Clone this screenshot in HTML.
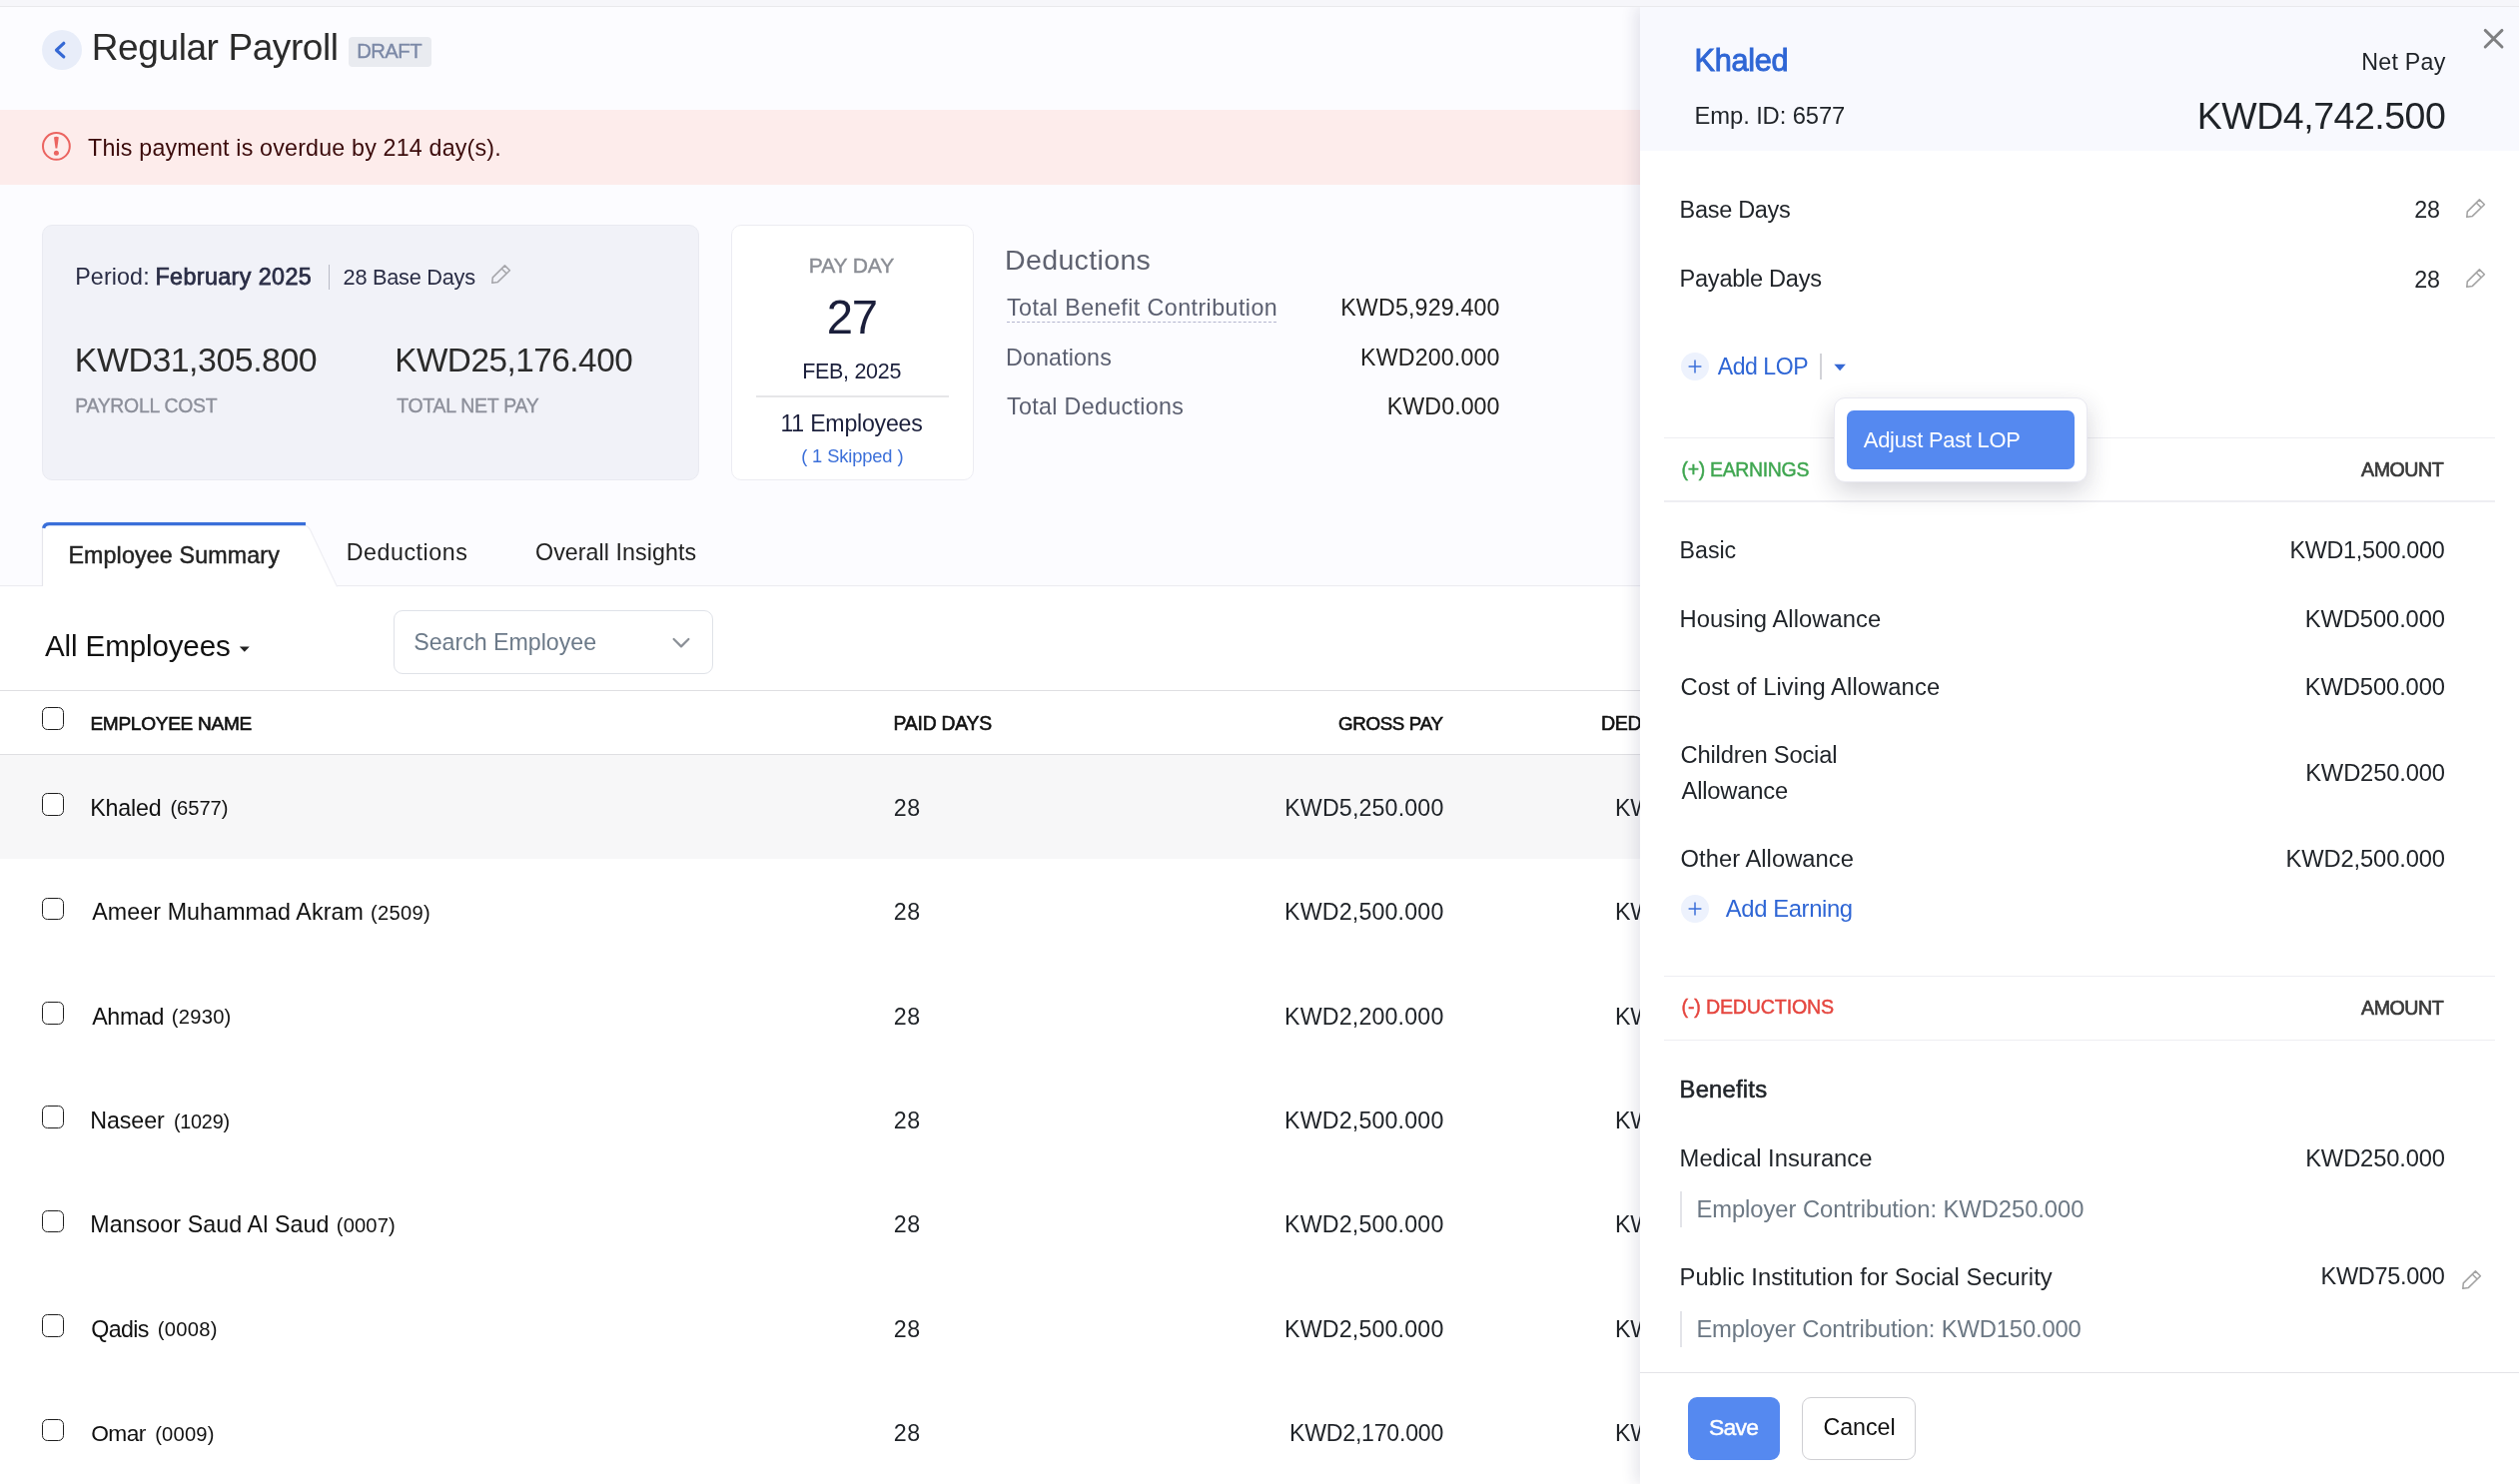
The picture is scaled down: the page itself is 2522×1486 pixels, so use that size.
<!DOCTYPE html>
<html lang="en">
<head>
<meta charset="utf-8">
<title>Regular Payroll</title>
<style>
*{box-sizing:border-box;margin:0;padding:0}
html,body{width:2522px;height:1486px;overflow:hidden}
body{position:relative;background:#fcfcff;font-family:"Liberation Sans",sans-serif;color:#1f2328}
.app{position:absolute;left:0;top:0;width:2522px;height:1486px;overflow:hidden;will-change:transform}
.t{position:absolute;white-space:nowrap;font-weight:400;font-style:normal;display:block}
.abs,.ic,.chk,.plus,.row,.line{position:absolute;display:block}
.topbar{left:0;top:0;width:2522px;height:7px;background:#f6f6fa;border-bottom:1px solid #e9e9ec}
.back{left:42px;top:30px;width:40px;height:40px;border-radius:50%;background:#e8edf9}
.badge{left:349px;top:37px;width:83px;height:30px;border-radius:4px;background:#e9ebf0}
.alert{left:0;top:110px;width:2522px;height:75px;background:#fdeceb}
.card{left:42px;top:224.5px;width:658px;height:256.5px;border-radius:10px;background:#f1f2f8;border:1px solid #e9eaf1}
.pay{left:732px;top:224.5px;width:243px;height:256.5px;border-radius:10px;background:#fff;border:1px solid #ececf2}
.tabline{left:0;top:586.2px;width:2522px;height:1.3px;background:#ececf1}
.below{left:0;top:587.5px;width:2522px;height:899px;background:#fff}
.search{left:394px;top:611px;width:320px;height:64px;border-radius:9px;background:#fff;border:1.5px solid #dfe2e8}
.line{height:1.5px;background:#dfdfe2}
.row{left:0;width:2522px;height:104.4px}
.row.sel{background:#f7f7f8}
.chk{width:22.2px;height:22.7px;border:1.8px solid #1f1f1f;border-radius:5.5px;background:#fff}
.plus{width:28px;height:28px;border-radius:50%;background:#edf2fd}
.panel{left:1642px;top:7px;width:880px;height:1479px;background:#fff;box-shadow:-5px 0 14px rgba(40,40,80,.11)}
.phead{left:1642px;top:7px;width:880px;height:144px;background:#f8f9fe}
.pline{height:1.5px;background:#eeeef2;left:1666px;width:832px}
.vbar{width:1.5px;background:#e3e4e9;left:1682px}
.pfoot{left:1642px;top:1373.5px;width:880px;height:1.5px;background:#e4e4e8}
.btn{top:1399px;height:63px;border-radius:9px}
.save{left:1690px;width:92px;background:#5589f0}
.cancel{left:1804px;width:114px;background:#fff;border:1.5px solid #cfcfd3}
.pop{left:1835.5px;top:398.3px;width:254.7px;height:85.2px;border-radius:11px;background:#fff;border:1px solid #e9e9f1;box-shadow:0 9px 24px rgba(30,30,60,.19)}
.popitem{left:1849px;top:411px;width:228px;height:59px;border-radius:7px;background:#5589f0}
</style>
</head>
<body>
<div class="app">

<header>
<a class="abs back"><svg width="40" height="40" viewBox="0 0 40 40"><path d="M21.8 13.3 L14.5 20.2 L21.8 26.9" fill="none" stroke="#3568d4" stroke-width="3.2" stroke-linecap="round" stroke-linejoin="round"/></svg></a>
<span class="abs badge"></span>
<h1 class="t" style="left:91.80px;top:25.20px;font-size:37.06px;line-height:45px;letter-spacing:-0.431px;color:#2b2b2b;">Regular Payroll</h1>
<span class="t" style="left:357.20px;top:39.20px;font-size:20.28px;line-height:25px;letter-spacing:-0.542px;color:#7b88a6;-webkit-text-stroke:0.35px #7b88a6;">DRAFT</span>
</header>

<section>
<div class="abs alert"></div>
<svg class="ic" style="left:41px;top:131px" width="31" height="31" viewBox="0 0 31 31"><circle cx="15.4" cy="15.4" r="13.4" fill="none" stroke="#eb6460" stroke-width="2"/><path d="M13 6.4 Q15.4 5 17.8 6.4 L16.3 17.6 H14.5 Z" fill="#eb6460"/><circle cx="15.4" cy="22.3" r="2.5" fill="#eb6460"/></svg>
<span class="t" style="left:88.00px;top:133.50px;font-size:23.25px;line-height:28px;letter-spacing:0.178px;color:#3b0b0b;">This payment is overdue by 214 day(s).</span>
</section>

<section>
<div class="abs card"></div>
<span class="t" style="left:75.20px;top:262.60px;font-size:23.25px;line-height:28px;letter-spacing:0.132px;color:#2a2d45;">Period:</span>
<span class="t" style="left:155.40px;top:262.60px;font-size:23.25px;line-height:28px;letter-spacing:0.426px;color:#2a2d45;-webkit-text-stroke:0.75px #2a2d45;">February 2025</span>
<span class="t" style="left:343.60px;top:263.60px;font-size:21.79px;line-height:27px;letter-spacing:-0.283px;color:#2a2d45;">28 Base Days</span>
<span class="t" style="left:74.80px;top:340.40px;font-size:33.88px;line-height:41px;letter-spacing:-0.478px;color:#2b2b2b;">KWD31,305.800</span>
<span class="t" style="left:395.20px;top:341.40px;font-size:33.32px;line-height:40px;letter-spacing:-0.493px;color:#2b2b2b;">KWD25,176.400</span>
<span class="t" style="left:75.20px;top:393.60px;font-size:19.37px;line-height:24px;letter-spacing:-0.233px;color:#8c8f9a;-webkit-text-stroke:0.35px #8c8f9a;">PAYROLL COST</span>
<span class="t" style="left:397.20px;top:393.60px;font-size:19.44px;line-height:24px;letter-spacing:-0.247px;color:#8c8f9a;-webkit-text-stroke:0.35px #8c8f9a;">TOTAL NET PAY</span>
<i class="abs" style="left:328.5px;top:265px;width:1.5px;height:25px;background:#b9bbc6"></i>
<svg class="ic" style="left:490.5px;top:264.2px" width="22" height="22" viewBox="0 0 22 22"><path d="M14.4 1.9 L19.4 6.7 L7.4 18.4 L1.8 19.3 L2.3 13.9 Z M11.5 5.2 L16.0 9.7" fill="none" stroke="#a6a6ab" stroke-width="1.55" stroke-linejoin="round" stroke-linecap="round"/></svg>
<div class="abs pay"></div>
<i class="abs" style="left:757px;top:396px;width:193px;height:2px;background:#e6e6e8"></i>
<span class="t" style="left:809.80px;top:253.20px;font-size:21.1px;line-height:26px;letter-spacing:-0.146px;color:#8a8d94;-webkit-text-stroke:0.4px #8a8d94;">PAY DAY</span>
<span class="t" style="left:827.80px;top:288.80px;font-size:47.3px;line-height:57px;letter-spacing:-1.304px;color:#1b1f3b;">27</span>
<span class="t" style="left:803.20px;top:358.50px;font-size:21.5px;line-height:26px;letter-spacing:-0.304px;color:#1b1f3b;">FEB, 2025</span>
<span class="t" style="left:781.40px;top:409.50px;font-size:23.16px;line-height:28px;letter-spacing:-0.240px;color:#1b1f3b;">11 Employees</span>
<span class="t" style="left:802.20px;top:446.30px;font-size:18.33px;line-height:22px;letter-spacing:-0.134px;color:#3b6fd9;">( 1 Skipped )</span>
<h3 class="t" style="left:1006.00px;top:243.40px;font-size:28.53px;line-height:35px;letter-spacing:0.355px;color:#5f6270;">Deductions</h3>
<span class="t" style="left:1008.00px;top:294.30px;font-size:23.25px;line-height:28px;letter-spacing:0.438px;color:#5b5f70;">Total Benefit Contribution</span>
<span class="t" style="left:1007.00px;top:343.60px;font-size:23.25px;line-height:28px;letter-spacing:0.141px;color:#5b5f70;">Donations</span>
<span class="t" style="left:1008.00px;top:392.70px;font-size:23.25px;line-height:28px;letter-spacing:0.329px;color:#5b5f70;">Total Deductions</span>
<span class="t" style="left:1342.20px;top:294.30px;font-size:23.25px;line-height:28px;letter-spacing:0.150px;color:#222;">KWD5,929.400</span>
<span class="t" style="left:1362.00px;top:343.60px;font-size:23.25px;line-height:28px;letter-spacing:0.138px;color:#222;">KWD200.000</span>
<span class="t" style="left:1388.80px;top:392.70px;font-size:23.25px;line-height:28px;letter-spacing:0.044px;color:#222;">KWD0.000</span>
<i class="abs" style="left:1008px;top:322px;width:270px;height:0;border-top:1.5px dashed #b4b5cf"></i>
</section>

<nav>
<div class="abs below"></div>
<div class="abs tabline"></div>
<svg class="ic" style="left:40px;top:520px" width="304" height="70" viewBox="0 0 304 70"><path d="M2.5 68 V10 Q2.5 4.5 8 4.5 H262 Q268 4.5 270.5 10 L298 68 Z" fill="#fff"/><path d="M2.5 67 V10 Q2.5 4.5 8 4.5" fill="none" stroke="#e6e6ec" stroke-width="1.2"/><path d="M266 6 Q269 7.5 270.8 11 L297.5 67.5" fill="none" stroke="#efeff4" stroke-width="1.3"/><path d="M3.6 8.8 Q4.6 4.6 9.4 4.6 H266" fill="none" stroke="#3a6fd9" stroke-width="3.3"/></svg>
<span class="t" style="left:68.40px;top:542.20px;font-size:23.25px;line-height:28px;letter-spacing:0.140px;color:#222;-webkit-text-stroke:0.45px #222;">Employee Summary</span>
<span class="t" style="left:346.80px;top:538.60px;font-size:23.25px;line-height:28px;letter-spacing:0.523px;color:#222;">Deductions</span>
<span class="t" style="left:536.00px;top:538.60px;font-size:23.25px;line-height:28px;letter-spacing:0.053px;color:#222;">Overall Insights</span>
</nav>

<main>
<span class="t" style="left:45.00px;top:629.40px;font-size:29.59px;line-height:36px;letter-spacing:-0.135px;color:#111;">All Employees</span>
<svg class="ic" style="left:239px;top:646px" width="12" height="8" viewBox="0 0 12 8"><path d="M0.8 1.6 H10.8 L5.8 6.8 Z" fill="#222"/></svg>
<div class="abs search"></div>
<svg class="ic" style="left:671px;top:636px" width="22" height="16" viewBox="0 0 22 16"><path d="M3.6 4 L11 11.4 L18.4 4" fill="none" stroke="#8b9097" stroke-width="2.2" stroke-linecap="round" stroke-linejoin="round"/></svg>
<span class="t" style="left:414.20px;top:628.90px;font-size:23.25px;line-height:28px;letter-spacing:-0.042px;color:#6c7a89;">Search Employee</span>
<i class="line" style="left:0;top:690.7px;width:2522px"></i>
<i class="chk" style="left:42px;top:708.4px"></i>
<span class="t" style="left:90.40px;top:712.50px;font-size:19.12px;line-height:23px;letter-spacing:-0.309px;color:#111;-webkit-text-stroke:0.6px #111;">EMPLOYEE NAME</span>
<span class="t" style="left:894.60px;top:711.50px;font-size:19.35px;line-height:24px;letter-spacing:-0.228px;color:#111;-webkit-text-stroke:0.6px #111;">PAID DAYS</span>
<span class="t" style="left:1340.00px;top:712.50px;font-size:18.72px;line-height:23px;letter-spacing:-0.315px;color:#111;-webkit-text-stroke:0.6px #111;">GROSS PAY</span>
<span class="t" style="left:1603.10px;top:711.50px;font-size:19.65px;line-height:24px;letter-spacing:-0.472px;color:#111;-webkit-text-stroke:0.6px #111;">DEDUCTIONS</span>
<i class="line" style="left:0;top:754.5px;width:2522px"></i>
<div class="row sel" style="top:755.5px"></div>
<i class="chk" style="left:42px;top:794.2px"></i>
<span class="t" style="left:90.20px;top:794.70px;font-size:23.25px;line-height:28px;letter-spacing:-0.173px;color:#111;">Khaled</span>
<span class="t" style="left:170.40px;top:797.20px;font-size:20.18px;line-height:25px;letter-spacing:-0.038px;color:#111;">(6577)</span>
<span class="t" style="left:894.80px;top:794.70px;font-size:23.25px;line-height:28px;letter-spacing:0.469px;color:#1f2328;">28</span>
<span class="t" style="left:1286.20px;top:794.70px;font-size:23.25px;line-height:28px;letter-spacing:0.132px;color:#1f2328;">KWD5,250.000</span>
<span class="t" style="left:1617.00px;top:794.70px;font-size:23.25px;line-height:28px;letter-spacing:-0.206px;color:#1f2328;">KWD507.500</span>
<div class="row" style="top:859.9px"></div>
<i class="chk" style="left:42px;top:898.6px"></i>
<span class="t" style="left:92.20px;top:899.10px;font-size:23.25px;line-height:28px;letter-spacing:0.086px;color:#111;">Ameer Muhammad Akram</span>
<span class="t" style="left:371.00px;top:901.60px;font-size:20.18px;line-height:25px;letter-spacing:0.282px;color:#111;">(2509)</span>
<span class="t" style="left:894.80px;top:899.10px;font-size:23.25px;line-height:28px;letter-spacing:0.469px;color:#1f2328;">28</span>
<span class="t" style="left:1286.00px;top:899.10px;font-size:23.25px;line-height:28px;letter-spacing:0.150px;color:#1f2328;">KWD2,500.000</span>
<span class="t" style="left:1617.00px;top:899.10px;font-size:23.25px;line-height:28px;letter-spacing:-0.206px;color:#1f2328;">KWD262.500</span>
<div class="row" style="top:964.3px"></div>
<i class="chk" style="left:42px;top:1003.0px"></i>
<span class="t" style="left:92.20px;top:1003.50px;font-size:23.25px;line-height:28px;letter-spacing:-0.334px;color:#111;">Ahmad</span>
<span class="t" style="left:171.80px;top:1006.00px;font-size:20.18px;line-height:25px;letter-spacing:0.242px;color:#111;">(2930)</span>
<span class="t" style="left:894.80px;top:1003.50px;font-size:23.25px;line-height:28px;letter-spacing:0.469px;color:#1f2328;">28</span>
<span class="t" style="left:1286.00px;top:1003.50px;font-size:23.25px;line-height:28px;letter-spacing:0.150px;color:#1f2328;">KWD2,200.000</span>
<span class="t" style="left:1617.00px;top:1003.50px;font-size:23.25px;line-height:28px;letter-spacing:-0.206px;color:#1f2328;">KWD231.000</span>
<div class="row" style="top:1068.7px"></div>
<i class="chk" style="left:42px;top:1107.4px"></i>
<span class="t" style="left:90.20px;top:1107.90px;font-size:23.25px;line-height:28px;letter-spacing:-0.081px;color:#111;">Naseer</span>
<span class="t" style="left:174.00px;top:1110.90px;font-size:19.81px;line-height:24px;letter-spacing:-0.247px;color:#111;">(1029)</span>
<span class="t" style="left:894.80px;top:1107.90px;font-size:23.25px;line-height:28px;letter-spacing:0.469px;color:#1f2328;">28</span>
<span class="t" style="left:1286.00px;top:1107.90px;font-size:23.25px;line-height:28px;letter-spacing:0.150px;color:#1f2328;">KWD2,500.000</span>
<span class="t" style="left:1617.00px;top:1107.90px;font-size:23.25px;line-height:28px;letter-spacing:-0.206px;color:#1f2328;">KWD262.500</span>
<div class="row" style="top:1173.1px"></div>
<i class="chk" style="left:42px;top:1211.8px"></i>
<span class="t" style="left:90.20px;top:1212.30px;font-size:23.25px;line-height:28px;letter-spacing:0.075px;color:#111;">Mansoor Saud Al Saud</span>
<span class="t" style="left:336.80px;top:1214.80px;font-size:20.18px;line-height:25px;letter-spacing:0.122px;color:#111;">(0007)</span>
<span class="t" style="left:894.80px;top:1212.30px;font-size:23.25px;line-height:28px;letter-spacing:0.469px;color:#1f2328;">28</span>
<span class="t" style="left:1286.00px;top:1212.30px;font-size:23.25px;line-height:28px;letter-spacing:0.150px;color:#1f2328;">KWD2,500.000</span>
<span class="t" style="left:1617.00px;top:1212.30px;font-size:23.25px;line-height:28px;letter-spacing:-0.206px;color:#1f2328;">KWD262.500</span>
<div class="row" style="top:1277.5px"></div>
<i class="chk" style="left:42px;top:1316.2px"></i>
<span class="t" style="left:91.20px;top:1316.70px;font-size:23.25px;line-height:28px;letter-spacing:-0.628px;color:#111;">Qadis</span>
<span class="t" style="left:157.80px;top:1319.20px;font-size:20.18px;line-height:25px;letter-spacing:0.282px;color:#111;">(0008)</span>
<span class="t" style="left:894.80px;top:1316.70px;font-size:23.25px;line-height:28px;letter-spacing:0.469px;color:#1f2328;">28</span>
<span class="t" style="left:1286.00px;top:1316.70px;font-size:23.25px;line-height:28px;letter-spacing:0.150px;color:#1f2328;">KWD2,500.000</span>
<span class="t" style="left:1617.00px;top:1316.70px;font-size:23.25px;line-height:28px;letter-spacing:-0.206px;color:#1f2328;">KWD262.500</span>
<div class="row" style="top:1381.9px"></div>
<i class="chk" style="left:42px;top:1420.6px"></i>
<span class="t" style="left:91.20px;top:1421.10px;font-size:22.76px;line-height:28px;letter-spacing:-0.566px;color:#111;">Omar</span>
<span class="t" style="left:155.20px;top:1423.60px;font-size:20.18px;line-height:25px;letter-spacing:0.202px;color:#111;">(0009)</span>
<span class="t" style="left:894.80px;top:1421.10px;font-size:23.25px;line-height:28px;letter-spacing:0.469px;color:#1f2328;">28</span>
<span class="t" style="left:1291.00px;top:1421.10px;font-size:23.14px;line-height:28px;letter-spacing:-0.233px;color:#1f2328;">KWD2,170.000</span>
<span class="t" style="left:1617.00px;top:1421.10px;font-size:23.25px;line-height:28px;letter-spacing:-0.206px;color:#1f2328;">KWD227.850</span>

</main>

<aside>
<div class="abs panel"></div>
<div class="abs phead"></div>
<svg class="ic" style="left:2485px;top:27px" width="24" height="24" viewBox="0 0 24 24"><path d="M3.2 3.4 L20 20 M20 3.4 L3.2 20" stroke="#7f8082" stroke-width="2.9" stroke-linecap="round" fill="none"/></svg>
<h2 class="t" style="left:1696.60px;top:42.20px;font-size:30.64px;line-height:37px;letter-spacing:-0.265px;color:#2f66d5;-webkit-text-stroke:0.95px #2f66d5;">Khaled</h2>
<span class="t" style="left:1696.60px;top:100.50px;font-size:23.78px;line-height:29px;letter-spacing:-0.108px;color:#1f2328;">Emp. ID: 6577</span>
<span class="t" style="left:2364.20px;top:47.80px;font-size:23.25px;line-height:28px;letter-spacing:0.254px;color:#1f2328;">Net Pay</span>
<span class="t" style="left:2199.80px;top:92.70px;font-size:37.51px;line-height:46px;letter-spacing:-0.478px;color:#1f2328;">KWD4,742.500</span>
<span class="t" style="left:1681.60px;top:195.50px;font-size:23.47px;line-height:29px;letter-spacing:-0.293px;color:#1f2328;">Base Days</span>
<span class="t" style="left:2417.20px;top:196.00px;font-size:23.33px;line-height:28px;letter-spacing:-0.174px;color:#1f2328;">28</span>
<span class="t" style="left:1681.60px;top:265.40px;font-size:23.57px;line-height:29px;letter-spacing:-0.273px;color:#1f2328;">Payable Days</span>
<span class="t" style="left:2417.20px;top:265.90px;font-size:23.33px;line-height:28px;letter-spacing:-0.174px;color:#1f2328;">28</span>
<svg class="ic" style="left:2468px;top:198px" width="22" height="22" viewBox="0 0 22 22"><path d="M14.4 1.9 L19.4 6.7 L7.4 18.4 L1.8 19.3 L2.3 13.9 Z M11.5 5.2 L16.0 9.7" fill="none" stroke="#a3a3a3" stroke-width="1.55" stroke-linejoin="round" stroke-linecap="round"/></svg>
<svg class="ic" style="left:2468px;top:267.9px" width="22" height="22" viewBox="0 0 22 22"><path d="M14.4 1.9 L19.4 6.7 L7.4 18.4 L1.8 19.3 L2.3 13.9 Z M11.5 5.2 L16.0 9.7" fill="none" stroke="#a3a3a3" stroke-width="1.55" stroke-linejoin="round" stroke-linecap="round"/></svg>
<i class="plus" style="left:1683.3px;top:353px"><svg width="28" height="28" viewBox="0 0 28 28"><path d="M14 7.6V20.4M7.6 14H20.4" stroke="#3b6fd9" stroke-width="1.5" fill="none"/></svg></i>
<span class="t" style="left:1719.80px;top:352.70px;font-size:23.07px;line-height:28px;letter-spacing:-0.468px;color:#2f66d5;">Add LOP</span>
<i class="abs" style="left:1822px;top:353.5px;width:2px;height:26.5px;background:#d2d3d8"></i>
<svg class="ic" style="left:1835px;top:363px" width="14" height="10" viewBox="0 0 14 10"><path d="M1.3 1.8 H12.9 L7.1 8.2 Z" fill="#3568d4"/></svg>
<i class="abs pline" style="top:437.5px"></i>
<i class="abs pline" style="top:501px"></i>
<span class="t" style="left:1683.60px;top:457.50px;font-size:19.44px;line-height:24px;letter-spacing:-0.314px;color:#3fa650;-webkit-text-stroke:0.45px #3fa650;">(+) EARNINGS</span>
<span class="t" style="left:2364.00px;top:457.80px;font-size:19.65px;line-height:24px;letter-spacing:-0.461px;color:#3a3a3a;-webkit-text-stroke:0.65px #3a3a3a;">AMOUNT</span>
<span class="t" style="left:1681.60px;top:537.30px;font-size:23.21px;line-height:28px;letter-spacing:-0.034px;color:#1f2328;">Basic</span>
<span class="t" style="left:2292.40px;top:536.80px;font-size:23.35px;line-height:29px;letter-spacing:-0.266px;color:#1f2328;">KWD1,500.000</span>
<span class="t" style="left:1681.60px;top:604.70px;font-size:23.78px;line-height:29px;letter-spacing:0.043px;color:#1f2328;">Housing Allowance</span>
<span class="t" style="left:2307.80px;top:604.70px;font-size:23.78px;line-height:29px;letter-spacing:-0.126px;color:#1f2328;">KWD500.000</span>
<span class="t" style="left:1682.60px;top:672.70px;font-size:23.78px;line-height:29px;letter-spacing:0.083px;color:#1f2328;">Cost of Living Allowance</span>
<span class="t" style="left:2307.80px;top:672.70px;font-size:23.78px;line-height:29px;letter-spacing:-0.126px;color:#1f2328;">KWD500.000</span>
<span class="t" style="left:1682.60px;top:740.70px;font-size:23.78px;line-height:29px;letter-spacing:-0.211px;color:#1f2328;">Children Social</span>
<span class="t" style="left:1683.60px;top:776.90px;font-size:23.78px;line-height:29px;letter-spacing:-0.214px;color:#1f2328;">Allowance</span>
<span class="t" style="left:2308.20px;top:758.60px;font-size:23.78px;line-height:29px;letter-spacing:-0.171px;color:#1f2328;">KWD250.000</span>
<span class="t" style="left:1682.60px;top:844.60px;font-size:23.78px;line-height:29px;letter-spacing:0.018px;color:#1f2328;">Other Allowance</span>
<span class="t" style="left:2288.60px;top:844.60px;font-size:23.78px;line-height:29px;letter-spacing:-0.160px;color:#1f2328;">KWD2,500.000</span>
<span class="t" style="left:1727.80px;top:894.60px;font-size:23.83px;line-height:29px;letter-spacing:-0.390px;color:#2f66d5;">Add Earning</span>
<i class="plus" style="left:1683.3px;top:896.4px"><svg width="28" height="28" viewBox="0 0 28 28"><path d="M14 7.6V20.4M7.6 14H20.4" stroke="#3b6fd9" stroke-width="1.5" fill="none"/></svg></i>
<i class="abs pline" style="top:976.8px"></i>
<i class="abs pline" style="top:1040.8px"></i>
<span class="t" style="left:1683.60px;top:996.40px;font-size:19.65px;line-height:24px;letter-spacing:-0.187px;color:#e5463f;-webkit-text-stroke:0.45px #e5463f;">(-) DEDUCTIONS</span>
<span class="t" style="left:2364.00px;top:996.80px;font-size:19.65px;line-height:24px;letter-spacing:-0.461px;color:#3a3a3a;-webkit-text-stroke:0.65px #3a3a3a;">AMOUNT</span>
<span class="t" style="left:1681.60px;top:1076.20px;font-size:23.78px;line-height:29px;letter-spacing:0.230px;color:#1f2328;-webkit-text-stroke:0.6px #1f2328;">Benefits</span>
<span class="t" style="left:1681.60px;top:1144.70px;font-size:23.78px;line-height:29px;letter-spacing:-0.003px;color:#1f2328;">Medical Insurance</span>
<span class="t" style="left:2308.20px;top:1144.50px;font-size:23.78px;line-height:29px;letter-spacing:-0.171px;color:#1f2328;">KWD250.000</span>
<span class="t" style="left:1698.40px;top:1195.70px;font-size:23.78px;line-height:29px;letter-spacing:-0.052px;color:#6c7884;">Employer Contribution: KWD250.000</span>
<span class="t" style="left:1681.60px;top:1264.20px;font-size:23.78px;line-height:29px;letter-spacing:0.052px;color:#1f2328;">Public Institution for Social Security</span>
<span class="t" style="left:2323.60px;top:1264.40px;font-size:23.55px;line-height:29px;letter-spacing:-0.332px;color:#1f2328;">KWD75.000</span>
<span class="t" style="left:1698.40px;top:1315.70px;font-size:23.78px;line-height:29px;letter-spacing:-0.133px;color:#6c7884;">Employer Contribution: KWD150.000</span>
<i class="abs vbar" style="top:1193px;height:36px"></i>
<i class="abs vbar" style="top:1313px;height:36px"></i>
<svg class="ic" style="left:2464.3px;top:1271px" width="22" height="22" viewBox="0 0 22 22"><path d="M14.4 1.9 L19.4 6.7 L7.4 18.4 L1.8 19.3 L2.3 13.9 Z M11.5 5.2 L16.0 9.7" fill="none" stroke="#a3a3a3" stroke-width="1.55" stroke-linejoin="round" stroke-linecap="round"/></svg>
<div class="abs pfoot"></div>
<div class="abs btn save"></div>
<div class="abs btn cancel"></div>
<span class="t" style="left:1711.00px;top:1415.30px;font-size:22.92px;line-height:28px;letter-spacing:-0.757px;color:#fff;-webkit-text-stroke:0.45px #fff;">Save</span>
<span class="t" style="left:1825.40px;top:1415.30px;font-size:23.25px;line-height:28px;letter-spacing:-0.041px;color:#111;">Cancel</span>
<div class="abs pop"></div>
<div class="abs popitem"></div>
<span class="t" style="left:1865.80px;top:427.10px;font-size:21.86px;line-height:27px;letter-spacing:-0.243px;color:#fff;">Adjust Past LOP</span>
</aside>
<div class="abs topbar"></div>
</div>
</body>
</html>
